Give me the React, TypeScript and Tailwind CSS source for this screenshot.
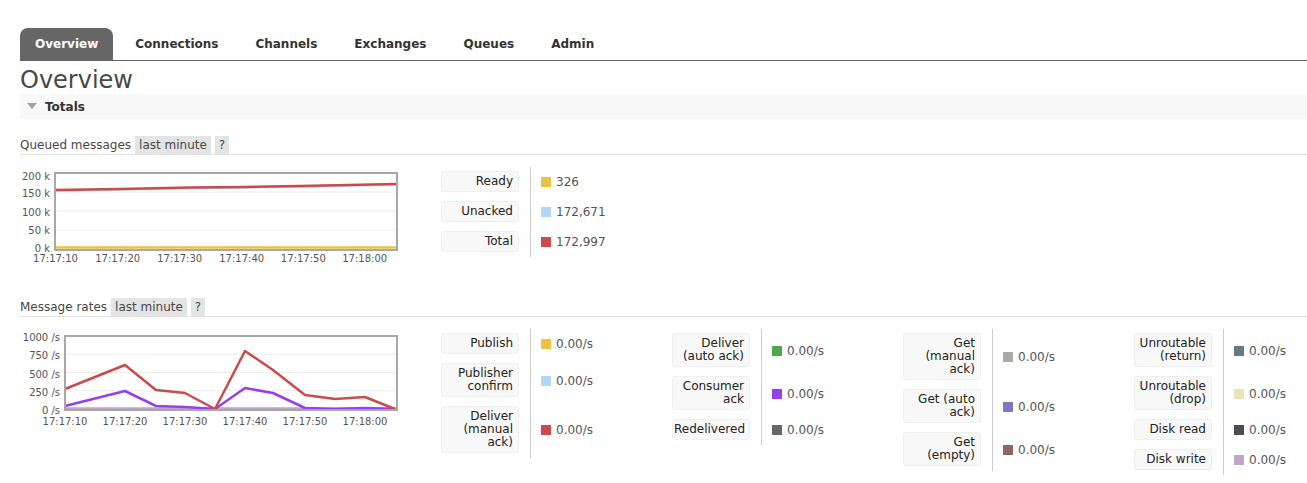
import React from 'react'

type Row = { label: string; value: string; color: string }

const tabs = ['Overview', 'Connections', 'Channels', 'Exchanges', 'Queues', 'Admin']

const queued: Row[] = [
  { label: 'Ready', value: '326', color: '#edc240' },
  { label: 'Unacked', value: '172,671', color: '#afd8f8' },
  { label: 'Total', value: '172,997', color: '#cb4b4b' },
]

const rateGroups: Row[][] = [
  [
    { label: 'Publish', value: '0.00/s', color: '#edc240' },
    { label: 'Publisher confirm', value: '0.00/s', color: '#afd8f8' },
    { label: 'Deliver (manual ack)', value: '0.00/s', color: '#cb4b4b' },
  ],
  [
    { label: 'Deliver (auto ack)', value: '0.00/s', color: '#4da74d' },
    { label: 'Consumer ack', value: '0.00/s', color: '#9440ed' },
    { label: 'Redelivered', value: '0.00/s', color: '#666666' },
  ],
  [
    { label: 'Get (manual ack)', value: '0.00/s', color: '#aaaaaa' },
    { label: 'Get (auto ack)', value: '0.00/s', color: '#7c79c3' },
    { label: 'Get (empty)', value: '0.00/s', color: '#8d6767' },
  ],
  [
    { label: 'Unroutable (return)', value: '0.00/s', color: '#637b85' },
    { label: 'Unroutable (drop)', value: '0.00/s', color: '#e8e4b4' },
    { label: 'Disk read', value: '0.00/s', color: '#4b4a55' },
    { label: 'Disk write', value: '0.00/s', color: '#c1a5c7' },
  ],
]

function SectionHeader({ title }: { title: string }) {
  return (
    <div className="flex items-center gap-[4px] h-[19px] border-b border-[#e2e2e2]">
      <span>{title}</span>
      <span className="bg-[#e4e4e4] h-[18px] leading-[18px] px-[4px]">last minute</span>
      <span className="bg-[#e4e4e4] h-[18px] leading-[18px] px-[4px]">?</span>
    </div>
  )
}

function StatTable({ rows }: { rows: Row[] }) {
  return (
    <div className="w-[231px] shrink-0 flex flex-col">
      {rows.map((r) => (
        <div key={r.label} className="flex">
          <div className="pt-[4px] pb-[5px] pr-[11px]">
            <div className="w-[78px] bg-[#f8f8f8] border border-[#efefef] rounded-[3px] pl-[1px] pr-[5px] py-[3px] leading-[13px] text-right text-[#222]">
              {r.label}
            </div>
          </div>
          <div className="flex-1 border-l border-[#cccccc] pl-[10px] flex items-center">
            <span className="w-[10px] h-[10px] mr-[5px]" style={{ backgroundColor: r.color }} />
            <span className="text-[#555]">{r.value}</span>
          </div>
        </div>
      ))}
    </div>
  )
}

function pts(p: number[][]) {
  return p.map(([x, y]) => `${x},${y}`).join(' ')
}

function QueuedChart() {
  const yLabels = [
    ['200 k', 9],
    ['150 k', 26.5],
    ['100 k', 45],
    ['50 k', 63.5],
    ['0 k', 81.5],
  ] as const
  const xLabels = ['17:17:10', '17:17:20', '17:17:30', '17:17:40', '17:17:50', '17:18:00']
  const xs = [35.5, 97.7, 159.7, 221.7, 283.3, 344.7]
  return (
    <svg width="421" height="100" className="shrink-0">
      {[6, 25, 44, 63].map((y) => (
        <line key={y} x1="35" x2="377" y1={y} y2={y} stroke="#ececec" strokeWidth="1" />
      ))}
      <polyline
        points={pts([[35, 23.5], [100, 22.5], [170, 21], [225, 20.5], [280, 19.5], [377, 17.5]])}
        fill="none"
        stroke="#afd8f8"
        strokeWidth="2.5"
      />
      <polyline
        points={pts([[35, 23], [100, 22], [170, 20.5], [225, 20], [280, 19], [377, 17]])}
        fill="none"
        stroke="#cb4b4b"
        strokeWidth="2.5"
      />
      <line x1="35" x2="377" y1="80.5" y2="80.5" stroke="#edc240" strokeWidth="2.5" />
      <rect x="35" y="6" width="342" height="77" fill="none" stroke="#a8a8a8" strokeWidth="2" />
      {yLabels.map(([t, y]) => (
        <text key={t} x="30" y={y} textAnchor="end" dominantBaseline="central" fontSize="10" fill="#545454">
          {t}
        </text>
      ))}
      {xLabels.map((t, i) => (
        <text key={t} x={xs[i]} y="91" textAnchor="middle" dominantBaseline="central" fontSize="10" fill="#545454">
          {t}
        </text>
      ))}
    </svg>
  )
}

function RatesChart() {
  const yLabels = [
    ['1000 /s', 8.7],
    ['750 /s', 26.7],
    ['500 /s', 45],
    ['250 /s', 63.3],
    ['0 /s', 81],
  ] as const
  const xLabels = ['17:17:10', '17:17:20', '17:17:30', '17:17:40', '17:17:50', '17:18:00']
  const xs = [45, 105, 165, 225, 285, 345]
  const red = [[45, 60], [105, 36], [136, 61], [165, 64], [195, 80], [225, 22], [253, 41], [285, 66], [315, 70], [345, 68], [375, 80]]
  const purple = [[45, 77], [105, 62], [136, 77], [165, 78], [195, 80], [225, 59], [253, 64], [285, 79], [315, 80], [345, 79], [375, 80]]
  return (
    <svg width="421" height="100" className="shrink-0">
      {[7, 25.25, 43.5, 61.75].map((y) => (
        <line key={y} x1="45" x2="377" y1={y} y2={y} stroke="#ececec" strokeWidth="1" />
      ))}
      <line x1="45" x2="377" y1="79.5" y2="79.5" stroke="#c1a5c7" strokeWidth="2.5" />
      <polyline points={pts(purple)} fill="none" stroke="#9440ed" strokeWidth="2.5" strokeLinejoin="round" />
      <polyline points={pts(red)} fill="none" stroke="#cb4b4b" strokeWidth="2.5" strokeLinejoin="round" />
      <rect x="45" y="7" width="332" height="74" fill="none" stroke="#a8a8a8" strokeWidth="2" />
      {yLabels.map(([t, y]) => (
        <text key={t} x="40" y={y} textAnchor="end" dominantBaseline="central" fontSize="10" fill="#545454">
          {t}
        </text>
      ))}
      {xLabels.map((t, i) => (
        <text key={t} x={xs[i]} y="92.7" textAnchor="middle" dominantBaseline="central" fontSize="10" fill="#545454">
          {t}
        </text>
      ))}
    </svg>
  )
}

export default function App() {
  return (
    <div className="min-h-screen overflow-hidden bg-white pl-[20px] pt-[28px] font-['DejaVu_Sans',Verdana,sans-serif] text-[12px] text-[#484848]">
      {/* tabs */}
      <nav className="flex gap-[7px] border-b border-[#666]">
        {tabs.map((t, i) => (
          <div
            key={t}
            className={
              i === 0
                ? 'h-[32px] px-[15px] flex items-center font-bold bg-[#666] text-white rounded-t-[8px]'
                : 'h-[32px] px-[15px] flex items-center font-bold text-[#333]'
            }
          >
            {t}
          </div>
        ))}
      </nav>

      <h1 className="text-[24px] font-normal h-[33px] leading-[38px] text-[#484848]">Overview</h1>

      <div className="bg-[#f8f8f8] h-[25px] flex items-center pl-[7px] gap-[8px]">
        <svg width="10" height="7" viewBox="0 0 10 7">
          <path d="M0 0 L10 0 L5 6 Z" fill="#a0a0a0" />
        </svg>
        <span className="font-bold text-[#333]">Totals</span>
      </div>

      <div className="mt-[17px]">
        <SectionHeader title="Queued messages" />
        <div className="flex mt-[12px]">
          <QueuedChart />
          <StatTable rows={queued} />
        </div>
      </div>

      <div className="mt-[31px]">
        <SectionHeader title="Message rates" />
        <div className="flex mt-[12px] items-start">
          <RatesChart />
          {rateGroups.map((g, i) => (
            <StatTable key={i} rows={g} />
          ))}
        </div>
      </div>
    </div>
  )
}
